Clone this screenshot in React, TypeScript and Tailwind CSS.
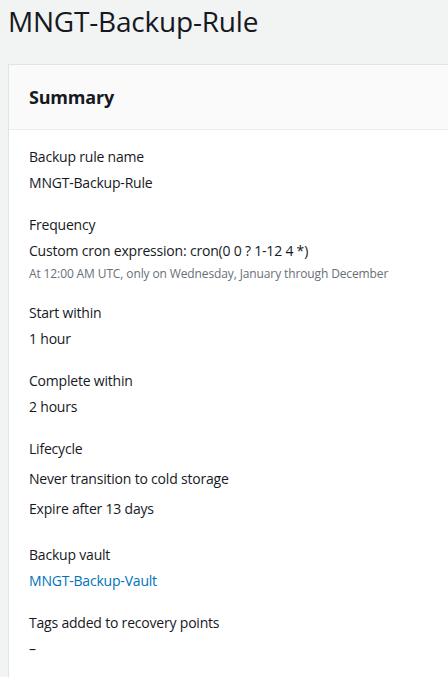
const groups = [
  { label: 'Backup rule name', values: ['MNGT-Backup-Rule'] },
  {
    label: 'Frequency',
    values: ['Custom cron expression: cron(0 0 ? 1-12 4 *)'],
    note: 'At 12:00 AM UTC, only on Wednesday, January through December',
  },
  { label: 'Start within', values: ['1 hour'] },
  { label: 'Complete within', values: ['2 hours'] },
  { label: 'Lifecycle', values: ['Never transition to cold storage', 'Expire after 13 days'] },
  { label: 'Backup vault', values: ['MNGT-Backup-Vault'], link: true },
  { label: 'Tags added to recovery points', values: ['–'] },
]

export default function App() {
  return (
    <div className="min-h-[677px] bg-[#f2f3f3] text-[#16191f] font-['Open_Sans',sans-serif]">
      <h1 className="pl-2 pt-[3px] text-[28px] leading-[36px] font-normal tracking-[-0.2px]">
        MNGT-Backup-Rule
      </h1>

      {/* Summary card */}
      <div className="mt-[25px] ml-2 bg-white border-l border-t border-[#e1e4e4] min-h-[612px]">
        <div className="bg-[#fafafa] border-b border-[#eaeded] px-5 py-[20px]">
          <h2 className="text-[18px] leading-[24px] font-bold tracking-[-0.2px]">Summary</h2>
        </div>

        <div className="px-5 pt-4 pb-6 flex flex-col gap-5 tracking-[-0.2px]">
          {groups.map((g) => (
            <div key={g.label} className={g.label === 'Lifecycle' ? 'pb-1' : ''}>
              <div className="text-[14px] leading-[22px]">{g.label}</div>
              <div className={`flex flex-col ${g.values.length > 1 ? 'gap-2 mt-2' : 'mt-1'}`}>
                {g.values.map((v) => (
                  <div
                    key={v}
                    className={`text-[14px] leading-[22px] ${g.link ? 'text-[#0073bb]' : ''}`}
                  >
                    {v}
                  </div>
                ))}
              </div>
              {g.note && (
                <div className="mt-1 text-[12px] leading-[16px] tracking-[-0.12px] text-[#687078]">
                  {g.note}
                </div>
              )}
            </div>
          ))}
        </div>
      </div>
    </div>
  )
}
